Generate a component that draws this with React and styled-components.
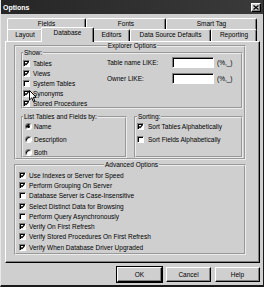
import React from "react";
import styled, { createGlobalStyle } from "styled-components";

const Global = createGlobalStyle`
  *, *::before, *::after { box-sizing: border-box; }
  html, body { margin: 0; padding: 0; background: #cfcfcf; }
  body { font-family: "Liberation Sans", Arial, sans-serif; font-size: 6.5px; color: #000; }
`;

const Window = styled.div`
  position: relative;
  width: 264px; height: 287px;
  background: #cfcfcf;
  border-left: 1px solid #e8e8e8;
  border-right: 1px solid #1a1a1a;
  border-bottom: 2px solid #1a1a1a;
  display: flex; flex-direction: column;
`;

const TitleBar = styled.div`
  height: 14px; flex: 0 0 14px;
  background: linear-gradient(90deg, #262626, #3a3a3a);
  color: #fff; font-weight: bold; font-size: 7px;
  display: flex; align-items: center; justify-content: space-between;
  padding: 0 2px 0 2px;
`;

const CloseBtn = styled.div`
  width: 10px; height: 9px;
  background: #cfcfcf;
  border: 1px solid; border-color: #fff #000 #000 #fff;
  box-shadow: inset -1px -1px 0 #808080;
  display: flex; align-items: center; justify-content: center;
`;

const Body = styled.div`
  flex: 1; display: flex; flex-direction: column;
  padding: 4px 3px 3px 4px;
`;

const TabRow = styled.div`
  display: flex; margin-left: 2px; width: 250px;
  height: ${p => p.$h}px;
  position: relative; z-index: ${p => p.$z};
`;

const Tab = styled.div`
  flex: 0 0 ${p => p.$w}px;
  height: ${p => p.$h}px;
  background: #cfcfcf;
  border-top: 1px solid #fff; border-left: 1px solid #fff; border-right: 1px solid #000;
  box-shadow: inset -1px 0 0 #808080;
  border-radius: 2px 2px 0 0;
  text-align: center; line-height: ${p => p.$h - 2}px;
  white-space: nowrap;
  ${p => p.$active && `
    position: relative; z-index: 3;
    flex-basis: ${p.$w + 3}px; height: ${p.$h + 3}px;
    margin: -2px -1px 0 -2px;
    line-height: ${p.$h - 3}px;
  `}
`;

const Panel = styled.div`
  height: 222px;
  border: 1px solid; border-color: #fff #000 #000 #fff;
  box-shadow: inset -1px -1px 0 #808080;
  padding: 0 12px 0 8px;
  display: flex; flex-direction: column;
`;

const Group = styled.fieldset`
  margin: ${p => p.$m || 0};
  padding: ${p => p.$pad || 0};
  width: ${p => p.$w}px; height: ${p => p.$h}px;
  border: 2px groove #ececec;
  min-width: 0;
`;

const Legend = styled.legend`
  padding: 0 1px; line-height: 7px;
  margin: ${p => (p.$center ? "0 auto" : "0")};
`;

const ShowInner = styled.div`
  display: flex; padding-top: 1px;
`;

const Column = styled.div`
  width: ${p => p.$w}px;
  padding-top: ${p => p.$pt || 0}px;
  padding-left: ${p => p.$pl || 0}px;
`;

const Row = styled.div`
  display: flex; align-items: center;
  height: ${p => p.$h}px;
  white-space: nowrap;
`;

const Box = styled.span`
  flex: 0 0 7px; width: 7px; height: 7px;
  background: #fff;
  border: 1px solid; border-color: #808080 #fff #fff #808080;
  box-shadow: inset 1px 1px 0 #000;
  margin-right: ${p => p.$gap}px;
  display: flex; align-items: center; justify-content: center;
`;

const Radio = styled.span`
  flex: 0 0 7px; width: 7px; height: 7px; border-radius: 50%;
  background: #fff;
  border: 1px solid; border-color: #808080 #fff #fff #808080;
  box-shadow: inset 1px 1px 0 #000;
  margin-right: 2px;
  display: flex; align-items: center; justify-content: center;
  &::after {
    content: ""; width: 3px; height: 3px; border-radius: 50%;
    background: ${p => (p.$on ? "#000" : "transparent")};
  }
`;

const FieldRow = styled.div`
  display: flex; align-items: center;
  height: 11px; margin-bottom: 5px;
`;

const FieldLabel = styled.span`
  width: 65px;
`;

const TextInput = styled.div`
  width: 42px; height: 11px; background: #fff;
  border: 1px solid; border-color: #808080 #fff #fff #808080;
  box-shadow: inset 1px 1px 0 #000;
  margin-right: 3px;
`;

const SplitRow = styled.div`
  display: flex; gap: 7px; margin-top: 4px;
`;

const Buttons = styled.div`
  display: flex; justify-content: flex-end; gap: 4px;
  margin-top: 4px;
`;

const Button = styled.div`
  width: 45px; height: 15px;
  display: flex; align-items: center; justify-content: center;
  border: 1px solid; border-color: #fff #000 #000 #fff;
  box-shadow: inset -1px -1px 0 #808080;
  ${p => p.$default && `
    outline: 1px solid #000;
    outline-offset: 0;
    border-color: #fff #000 #000 #fff;
  `}
`;

const Cursor = styled.svg`
  position: absolute; left: 28px; top: 90px;
`;

const Check = ({ on, gap = 3 }) => (
  <Box $gap={gap}>
    {on && (
      <svg width="5" height="5" viewBox="0 0 7 7">
        <path d="M1 3.2 L2.8 5.2 L6.2 1.4" fill="none" stroke="#000" strokeWidth="1.6" />
      </svg>
    )}
  </Box>
);

const showItems = [
  ["Tables", true], ["Views", true], ["System Tables", false], ["Synonyms", true], ["Stored Procedures", true],
];

const advanced = [
  ["Use Indexes or Server for Speed", true],
  ["Perform Grouping On Server", true],
  ["Database Server is Case-Insensitive", false],
  ["Select Distinct Data for Browsing", true],
  ["Perform Query Asynchronously", false],
  ["Verify On First Refresh", true],
  ["Verify Stored Procedures On First Refresh", true],
  ["Verify When Database Driver Upgraded", true],
];

export default function App() {
  return (
    <>
      <Global />
      <Window>
        <TitleBar>
          <span>Options</span>
          <CloseBtn>
            <svg width="6" height="5" viewBox="0 0 6 5">
              <path d="M0.5 0.5 L5.5 4.5 M5.5 0.5 L0.5 4.5" stroke="#000" strokeWidth="1.2" />
            </svg>
          </CloseBtn>
        </TitleBar>
        <Body>
          <TabRow $h={11} $z={1}>
            <Tab $w={79} $h={12}>Fields</Tab>
            <Tab $w={80} $h={12}>Fonts</Tab>
            <Tab $w={91} $h={12}>Smart Tag</Tab>
          </TabRow>
          <TabRow $h={12} $z={2}>
            <Tab $w={36} $h={12}>Layout</Tab>
            <Tab $w={50} $h={12} $active>Database</Tab>
            <Tab $w={37} $h={12}>Editors</Tab>
            <Tab $w={81} $h={12}>Data Source Defaults</Tab>
            <Tab $w={46} $h={12}>Reporting</Tab>
          </TabRow>
          <Panel>
            <Group $w={232} $h={118} $pad="0 1px 0 5px">
              <Legend $center>Explorer Options</Legend>
              <Group $w={222} $h={60}>
                <Legend>Show:</Legend>
                <ShowInner>
                  <Column $w={84} $pt={2}>
                    {showItems.map(([t, on]) => (
                      <Row key={t} $h={9.8}><Check on={on} />{t}</Row>
                    ))}
                  </Column>
                  <Column $w={130}>
                    <FieldRow><FieldLabel>Table name LIKE:</FieldLabel><TextInput />(%,_)</FieldRow>
                    <FieldRow><FieldLabel>Owner LIKE:</FieldLabel><TextInput />(%,_)</FieldRow>
                  </Column>
                </ShowInner>
              </Group>
              <SplitRow>
                <Group $w={106} $h={45}>
                  <Legend>List Tables and Fields by:</Legend>
                  <Column $w={100} $pl={2}>
                    <Row $h={13}><Radio $on />Name</Row>
                    <Row $h={13}><Radio />Description</Row>
                    <Row $h={13}><Radio />Both</Row>
                  </Column>
                </Group>
                <Group $w={109} $h={45} $pad="0 0 0 1px">
                  <Legend>Sorting:</Legend>
                  <Row $h={13}><Check on gap={4} />Sort Tables Alphabetically</Row>
                  <Row $h={13}><Check gap={4} />Sort Fields Alphabetically</Row>
                </Group>
              </SplitRow>
            </Group>
            <Group $w={232} $h={94} $m="1px 0 0 0" $pad="2px 0 0 3px">
              <Legend $center>Advanced Options</Legend>
              {advanced.map(([t, on]) => (
                <Row key={t} $h={10.3}><Check on={on} />{t}</Row>
              ))}
            </Group>
          </Panel>
          <Buttons>
            <Button $default>OK</Button>
            <Button>Cancel</Button>
            <Button>Help</Button>
          </Buttons>
        </Body>
        <Cursor width="8" height="13" viewBox="0 0 8 13">
          <path d="M0.5 0.5 L0.5 10 L2.8 7.8 L4.4 11.6 L5.8 11 L4.3 7.3 L7.2 7.3 Z" fill="#fff" stroke="#000" strokeWidth="1" />
        </Cursor>
      </Window>
    </>
  );
}
